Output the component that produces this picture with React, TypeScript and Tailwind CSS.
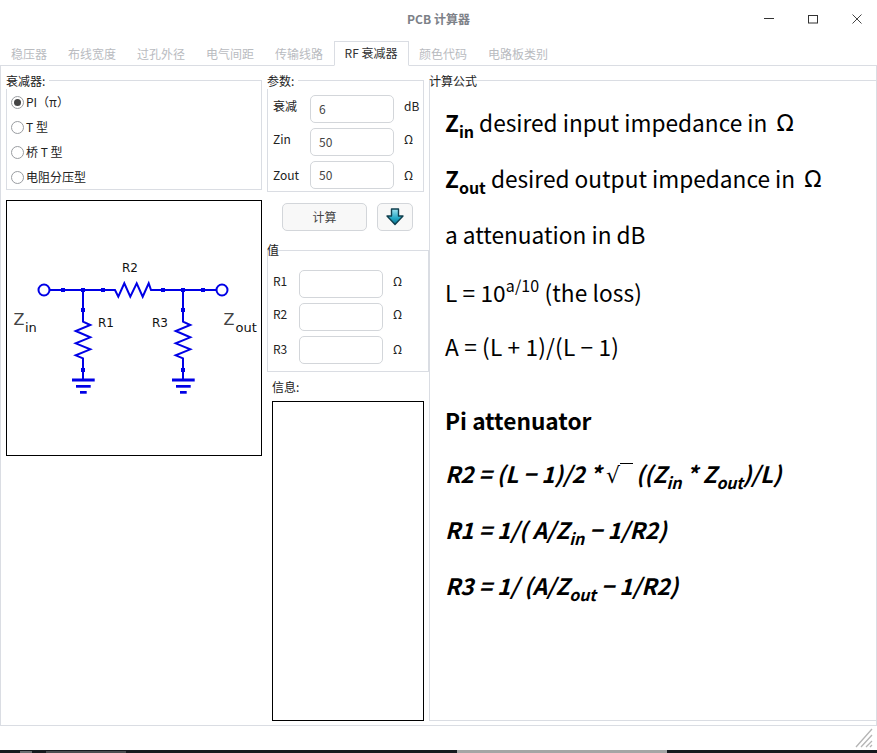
const cjk = '"Noto Sans CJK SC", "Noto Sans", sans-serif'
const blue = '#0000e6'

const tabs = ['稳压器', '布线宽度', '过孔外径', '电气间距', '传输线路', 'RF 衰减器', '颜色代码', '电路板类别']

function Resistor({ x }: { x: number }) {
  const pts = [
    [x, 90],
    [x, 121.7],
    [x + 7.3, 125],
    [x - 7.3, 131],
    [x + 7.3, 137.3],
    [x - 7.3, 143.3],
    [x + 7.3, 149.3],
    [x - 7.3, 155.3],
    [x, 158.3],
    [x, 180],
  ]
  return (
    <>
      <polyline points={pts.map((p) => p.join(',')).join(' ')} fill="none" stroke={blue} strokeWidth="2" />
      <rect x={x - 2} y={108} width="4" height="4" fill={blue} />
      <rect x={x - 2} y={168} width="4" height="4" fill={blue} />
      <rect x={x - 2} y={88} width="4" height="4" fill={blue} />
      <rect x={x - 11} y={178.5} width="22.7" height="3" fill={blue} />
      <rect x={x - 7} y={185} width="14.7" height="2.7" fill={blue} />
      <rect x={x - 3} y={191} width="6.7" height="2.7" fill={blue} />
    </>
  )
}

function Circuit() {
  return (
    <svg width="254" height="254" viewBox="1 1 254 254" className="block">
      <g fill="none" stroke={blue} strokeWidth="2">
        <circle cx="38" cy="90" r="5.5" />
        <circle cx="216" cy="90" r="5.5" />
        <path d="M44 90H109L112.3 96.7L118.3 83.3L124.3 96.7L130.7 83.3L136.7 96.7L142.7 83.3L145 90H210" />
      </g>
      {[57, 97, 157, 197].map((x) => (
        <rect key={x} x={x - 2} y="88" width="4" height="4" fill={blue} />
      ))}
      <Resistor x={77} />
      <Resistor x={177} />
      <g fontFamily='"DejaVu Sans", sans-serif' fill="#111">
        <text x="116" y="72" fontSize="12">R2</text>
        <text x="92" y="127" fontSize="12">R1</text>
        <text x="146" y="127" fontSize="12">R3</text>
        <text x="7.5" y="125" fontSize="16" fill="#444">Z</text>
        <text x="19" y="132" fontSize="13">in</text>
        <text x="217.5" y="125" fontSize="16" fill="#444">Z</text>
        <text x="229.5" y="132" fontSize="13">out</text>
      </g>
    </svg>
  )
}

function Field({
  label,
  value,
  unit,
  labelW,
  shift,
}: {
  label: string
  value: string
  unit: string
  labelW: string
  shift: string
}) {
  return (
    <div className="flex h-[28px] items-center">
      <span className={`${labelW} ${shift} text-[12px] text-[#222]`}>{label}</span>
      <div className="flex h-[28px] w-[84px] items-center rounded-[5px] border border-[#d3d6da] bg-white pl-2 pt-px text-[12px] text-[#444]">
        {value}
      </div>
      <span className={`${shift} pl-[10px] text-[12px] text-[#222]`}>{unit}</span>
    </div>
  )
}

function Radio({ label, on }: { label: string; on?: boolean }) {
  return (
    <div className="flex h-[25px] items-center gap-[2px] text-[12px] text-[#222]">
      <span className="flex h-[13px] w-[13px] items-center justify-center rounded-full border border-[#9a9da1] bg-white">
        {on && <span className="h-[7px] w-[7px] rounded-full bg-[#444]" />}
      </span>
      <span>{label}</span>
    </div>
  )
}

function Sub({ children }: { children: string }) {
  return <sub className="relative top-[6px] align-baseline text-[16px] leading-none">{children}</sub>
}

function Line({ children, h }: { children: React.ReactNode; h: string }) {
  return <div className={`${h} flex items-center whitespace-pre text-[22.67px] leading-none text-black`}>{children}</div>
}

function Omega() {
  return <span className="ml-[4px] font-['DejaVu_Sans']">Ω</span>
}

function ArrowDown() {
  return (
    <svg width="20" height="18" viewBox="0 0 20 18">
      <defs>
        <linearGradient id="arrowFill" x1="0" y1="0" x2="0" y2="1">
          <stop offset="0" stopColor="#9fe4f2" />
          <stop offset="0.6" stopColor="#22a7c4" />
          <stop offset="1" stopColor="#0b6f8c" />
        </linearGradient>
      </defs>
      <path d="M6.5 1H13.5V8H18L10 16.5L2 8H6.5Z" fill="url(#arrowFill)" stroke="#0f3f4e" strokeWidth="1.4" strokeLinejoin="round" />
    </svg>
  )
}

export default function App() {
  return (
    <div className="flex h-[753px] w-[877px] flex-col overflow-hidden bg-white" style={{ fontFamily: cjk }}>
      <header className="relative flex h-[41px] items-center justify-center pb-[3px] text-[12px] font-bold text-[#7d8188]">
        PCB 计算器
        <div className="absolute right-[12px] top-[11px] flex items-center gap-[28px] text-[#333]">
          <svg width="16" height="16" viewBox="0 0 16 16"><path d="M3 7.5H13" stroke="#333" strokeWidth="1" /></svg>
          <svg width="16" height="16" viewBox="0 0 16 16"><rect x="3.5" y="4.5" width="9" height="7.5" fill="none" stroke="#333" strokeWidth="1" /></svg>
          <svg width="16" height="16" viewBox="0 0 16 16"><path d="M3.5 3.5L12.5 12.5M12.5 3.5L3.5 12.5" stroke="#444" strokeWidth="1" /></svg>
        </div>
      </header>

      <nav className="relative z-10 -mb-px flex h-[25px] pl-[0.5px] text-[12px]">
        {tabs.map((t, i) => (
          <div
            key={t}
            className={
              i === 5
                ? 'flex h-[25px] items-center border border-b-white border-[#dadde3] bg-white px-[10px] text-[#333]'
                : 'flex h-[25px] items-center px-[10.5px] pt-px text-[#b9bbbf]'
            }
          >
            {t}
          </div>
        ))}
      </nav>

      <main className="flex h-[662px] border border-[#dadde3] pl-[5px] pt-[14px]">
        <section className="w-[261px]">
          <div className="relative h-[110px] w-[256px] border border-[#dadde3] pt-[9px] pl-[4px]">
            <span className="absolute -left-px -top-[8px] bg-white pr-1 text-[12px] leading-[16px] text-[#222]">衰减器:</span>
            <Radio label="PI（π）" on />
            <Radio label="T 型" />
            <Radio label="桥 T 型" />
            <Radio label="电阻分压型" />
          </div>
          <div className="mt-[10px] h-[256px] w-[256px] border border-black bg-white">
            <Circuit />
          </div>
        </section>

        <section className="w-[162px]">
          <div className="relative flex h-[112px] w-[157px] flex-col gap-[5px] border border-[#dadde3] pl-[5px] pt-[14px]">
            <span className="absolute -left-px -top-[8px] bg-white pr-1 text-[12px] leading-[16px] text-[#222]">参数:</span>
            <Field label="衰减" value="6" unit="dB" labelW="w-[37px]" shift="-mt-[6px]" />
            <Field label="Zin" value="50" unit="Ω" labelW="w-[37px]" shift="-mt-[6px]" />
            <Field label="Zout" value="50" unit="Ω" labelW="w-[37px]" shift="mt-0" />
          </div>

          <div className="mt-[11px] flex gap-[10px] pl-[15px]">
            <div className="flex h-[28px] w-[85px] items-center justify-center rounded-[5px] border border-[#d3d6da] bg-[#f8f8f8] text-[12px] text-[#444]">计算</div>
            <div className="flex h-[28px] w-[36px] items-center justify-center rounded-[5px] border border-[#d3d6da] bg-[#f8f8f8]"><ArrowDown /></div>
          </div>

          <div className="relative mt-[19px] flex h-[122px] w-[162px] flex-col gap-[5px] border border-[#dadde3] pl-[5px] pt-[19px]">
            <span className="absolute -left-px -top-[9px] text-[12px] leading-[16px] text-[#222]">值</span>
            <Field label="R1" value="" unit="Ω" labelW="w-[26px]" shift="-mt-[6px]" />
            <Field label="R2" value="" unit="Ω" labelW="w-[26px]" shift="-mt-[6px]" />
            <Field label="R3" value="" unit="Ω" labelW="w-[26px]" shift="-mt-[2px]" />
          </div>

          <div className="pl-[5px]">
            <div className="flex h-[29px] items-center pt-[2px] text-[12px] text-[#222]">信息:</div>
            <div className="h-[320px] w-[152px] border border-black bg-white" />
          </div>
        </section>

        <section className="relative h-[641px] w-[447px] border-b border-l border-t border-[#dadde3] pl-[15px] pt-[14px]">
          <span className="absolute -left-px -top-[8px] text-[12px] leading-[16px] text-[#222]">计算公式</span>
          <Line h="h-[56px]"><b>Z<Sub>in</Sub></b> desired input impedance in <Omega /></Line>
          <Line h="h-[56px]"><b>Z<Sub>out</Sub></b> desired output impedance in <Omega /></Line>
          <Line h="h-[56px]">a attenuation in dB</Line>
          <Line h="h-[58px] pt-[2px] tracking-[0.1px]">
            L = 10<sup className="relative -top-[8px] align-baseline text-[16px] leading-none">a/10</sup> (the loss)
          </Line>
          <Line h="h-[54px] pb-[2px] tracking-[0.15px]">A = (L + 1)/(L − 1)</Line>
          <div className="h-[19px]" />
          <Line h="h-[54px] pt-px"><b>Pi attenuator</b></Line>
          <Line h="h-[54px] tracking-[-0.15px]">
            <b className="italic">
              R2 = (L − 1)/2 * <span className="font-['DejaVu_Sans'] text-[22px] font-normal not-italic">√</span>
              <span className="relative -top-[19px] -mr-[2px] inline-block h-px w-[13px] bg-black align-baseline" /> ((Z<Sub>in</Sub> * Z<Sub>out</Sub>)/L)
            </b>
          </Line>
          <Line h="h-[57px] tracking-[-0.1px]"><b className="italic">R1 = 1/( A/Z<Sub>in</Sub> − 1/R2)</b></Line>
          <Line h="h-[55px] tracking-[-0.1px]"><b className="italic">R3 = 1/ (A/Z<Sub>out</Sub> − 1/R2)</b></Line>
        </section>
      </main>

      <footer className="flex h-[24px] items-end justify-end pb-[2px] pr-[4px]">
        <svg width="18" height="20" viewBox="0 0 18 20">
          <path d="M1 19L17 1M6 19L17 7M11 19L17 13M15 19L17 17" stroke="#b5b5b5" strokeWidth="1.3" fill="none" />
        </svg>
      </footer>
      <div className="flex h-[3px] bg-[#161a1e]">
        <div className="ml-[20px] mt-px h-[2px] w-[12px] bg-[#6a6d70]" />
        <div className="ml-[14px] mt-px h-[2px] w-[80px] bg-[#4a4d50]" />
        <div className="ml-[331px] h-[3px] w-[210px] bg-[#a5a5a5]" />
      </div>
    </div>
  )
}
